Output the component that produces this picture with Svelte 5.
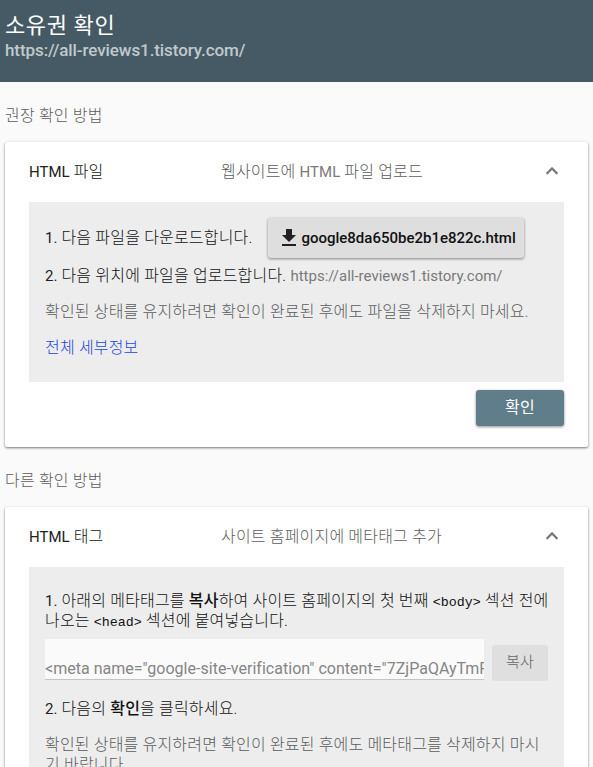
<script lang="ts">
	const site = 'https://all-reviews1.tistory.com/';
	const fileName = 'google8da650be2b1e822c.html';
	const metaTag = '<meta name="google-site-verification" content="7ZjPaQAyTmF';
</script>

{#snippet chevron()}
	<svg class="chevron" viewBox="0 0 24 24" width="24" height="24">
		<path d="M12 8l-6 6 1.41 1.41L12 10.83l4.59 4.58L18 14z" />
	</svg>
{/snippet}

<div class="page">
	<header>
		<h1>소유권 확인</h1>
		<div class="site">{site}</div>
	</header>

	<h2>권장 확인 방법</h2>
	<section class="card first">
		<div class="card-head">
			<span class="name"><span class="latin">HTML</span> 파일</span>
			<span class="summary">웹사이트에 <span class="latin">HTML</span> 파일 업로드</span>
			{@render chevron()}
		</div>
		<div class="panel file">
			<div class="download-row">
				<span><span class="latin">1.</span> 다음 파일을 다운로드합니다.</span>
				<button class="download">
					<svg viewBox="0 0 24 24" width="24" height="24"><path d="M19 9h-4V3H9v6H5l7 7 7-7zM5 18v2h14v-2H5z" /></svg>
					<span>{fileName}</span>
				</button>
			</div>
			<p class="upload"><span class="latin">2.</span> 다음 위치에 파일을 업로드합니다. <span class="latin url">{site}</span></p>
			<p class="muted">확인된 상태를 유지하려면 확인이 완료된 후에도 파일을 삭제하지 마세요.</p>
			<p><a href="#details">전체 세부정보</a></p>
		</div>
		<div class="actions">
			<button class="verify">확인</button>
		</div>
	</section>

	<h2>다른 확인 방법</h2>
	<section class="card">
		<div class="card-head">
			<span class="name"><span class="latin">HTML</span> 태그</span>
			<span class="summary">사이트 홈페이지에 메타태그 추가</span>
			{@render chevron()}
		</div>
		<div class="panel tag">
			<p><span class="latin">1.</span> 아래의 메타태그를 <b>복사</b>하여 사이트 홈페이지의 첫 번째 <code>&lt;body&gt;</code> 섹션 전에<br />나오는 <code>&lt;head&gt;</code> 섹션에 붙여넣습니다.</p>
			<div class="copy-row">
				<div class="meta">{metaTag}</div>
				<button class="copy">복사</button>
			</div>
			<p><span class="latin">2.</span> 다음의 <b>확인</b>을 클릭하세요.</p>
			<p class="muted">확인된 상태를 유지하려면 확인이 완료된 후에도 메타태그를 삭제하지 마시<br />기 바랍니다.</p>
		</div>
	</section>
</div>

<style>
	:global(body) { margin: 0; background: #fafafa; overflow: hidden; }

	.page {
		height: 767px; overflow: hidden; background: #fafafa; color: #111;
		font-family: Roboto, "Noto Sans CJK KR", sans-serif; font-weight: 300;
		font-size: 16px; line-height: 20px; letter-spacing: 0.18px; white-space: nowrap;
	}
	.latin { font-size: 15px; line-height: 1; font-weight: 400; letter-spacing: 0; color: #212121; }
	.muted { color: #5c5c5c; }
	.latin.url, .summary .latin { color: #7a7a7a; }

	header { height: 82px; box-sizing: border-box; padding: 11px 5px 0; background: #455a64; }
	h1 { margin: 0; font-size: 22px; line-height: 29px; font-weight: 400; letter-spacing: 0.6px; color: #fff; }
	.site { font-size: 17px; line-height: 20px; letter-spacing: -0.08px; font-weight: 500; color: #c0c9cd; }

	h2 { margin: 0; padding: 24px 5px 16px; font-size: 16px; line-height: 20px; font-weight: 300; color: #5c5c5c; }

	.card {
		margin: 0 5px; padding: 0 24px; background: #fff; border-radius: 2px;
		box-shadow: 0 1px 3px rgba(0, 0, 0, 0.3), 0 1px 2px rgba(0, 0, 0, 0.28);
	}
	.first { height: 305px; }
	.card-head { display: flex; align-items: center; height: 60px; }
	.name { width: 192px; }
	.summary { flex: 1; color: #5c5c5c; }
	.chevron { margin-top: -2px; fill: #757575; stroke: #757575; stroke-width: 0.3; }

	.panel { padding: 16px 16px 0; background: #ededed; }
	.file { height: 164px; }
	.tag { height: 220px; padding-top: 24px; }
	p { margin: 0 0 16px; }
	p.upload { margin-top: 8px; }
	a { color: #2347e0; text-decoration: none; }
	b { font-weight: 500; }
	code { font-family: "Liberation Mono", monospace; font-size: 13.33px; line-height: 1; letter-spacing: 0; }

	button { border: 0; padding: 0; font: inherit; letter-spacing: inherit; color: inherit; }
	.download-row { display: flex; align-items: center; gap: 16px; height: 40px; }
	.download {
		display: flex; align-items: center; width: 256px; height: 40px; padding-left: 9px;
		background: #dedede; border-radius: 3px; font-size: 15px; font-weight: 500; letter-spacing: 0;
		box-shadow: 0 1px 3px rgba(0, 0, 0, 0.45);
	}
	.download svg { fill: #212121; }

	.actions { display: flex; justify-content: flex-end; padding-top: 8px; }
	.verify {
		width: 88px; height: 36px; background: #607d8b; color: #fff; border-radius: 3px; font-weight: 400;
		box-shadow: 0 1px 3px rgba(0, 0, 0, 0.45);
	}

	.copy-row { display: flex; align-items: flex-end; gap: 8px; height: 42px; margin: -8px 0 18px; }
	.meta {
		width: 439px; height: 40px; margin-bottom: 1px; overflow: hidden; background: #fafafa; border-bottom: 1px solid #c4c4c4;
		font-size: 16px; line-height: 59px; letter-spacing: 0.02px; font-weight: 400; color: #858585;
	}
	.copy { width: 56px; height: 36px; padding-bottom: 2px; background: #dfdfdf; border-radius: 3px; font-size: 15px; color: #666; }
</style>
